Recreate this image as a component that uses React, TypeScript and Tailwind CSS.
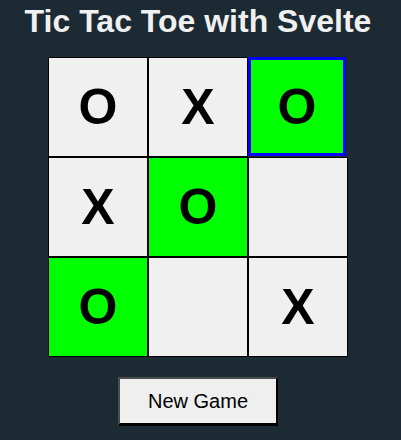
import React from "react";

const board: { v: string; win: boolean; focus?: boolean }[] = [
  { v: "O", win: false },
  { v: "X", win: false },
  { v: "O", win: true, focus: true },
  { v: "X", win: false },
  { v: "O", win: true },
  { v: "", win: false },
  { v: "O", win: true },
  { v: "", win: false },
  { v: "X", win: false },
];

export default function App() {
  return (
    <div
      className="w-[401px] h-[440px] bg-[#1b2a33] overflow-hidden"
      style={{ fontFamily: '"Liberation Sans", Arial, sans-serif' }}
    >
      <div className="w-[396px] flex flex-col items-center pt-[3px]">
        <h1 className="text-[32px] leading-[37px] font-bold text-[#f0f0f0] m-0">
          Tic Tac Toe with Svelte
        </h1>
        <div className="mt-[17px] grid grid-cols-[100px_100px_100px] grid-rows-[100px_100px_100px]">
          {board.map((c, i) => (
            <div
              key={i}
              className={
                c.focus
                  ? "w-[98px] h-[99px] border-[3px] border-[#0000ff] bg-[#00ff00] flex items-center justify-center"
                  : c.win
                  ? "w-[100px] h-[100px] border border-black bg-[#00ff00] flex items-center justify-center"
                  : "w-[100px] h-[100px] border border-black bg-[#f0f0f0] flex items-center justify-center"
              }
            >
              <span className="text-[50px] leading-none font-bold text-black">{c.v}</span>
            </div>
          ))}
        </div>
        <button className="mt-[20px] w-[160px] h-[49px] bg-[#efefef] border-2 border-t-[#4c4c4c] border-l-[#4c4c4c] border-r-black border-b-black border-b-[3px] text-[20px] text-black">
          New Game
        </button>
      </div>
    </div>
  );
}
